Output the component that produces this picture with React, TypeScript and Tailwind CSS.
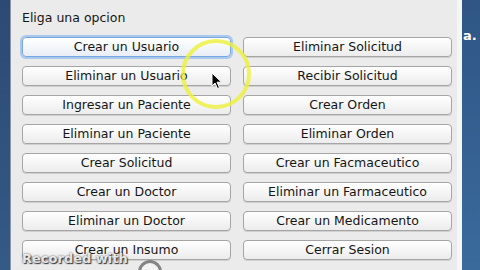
import React from 'react'

const left = [
  'Crear un Usuario',
  'Eliminar un Usuario',
  'Ingresar un Paciente',
  'Eliminar un Paciente',
  'Crear Solicitud',
  'Crear un Doctor',
  'Eliminar un Doctor',
  'Crear un Insumo',
]

const right = [
  'Eliminar Solicitud',
  'Recibir Solicitud',
  'Crear Orden',
  'Eliminar Orden',
  'Crear un Facmaceutico',
  'Eliminar un Farmaceutico',
  'Crear un Medicamento',
  'Cerrar Sesion',
]

function MacButton({ label, focused }: { label: string; focused?: boolean }) {
  return (
    <button
      className={
        focused
          ? 'h-[20px] w-full rounded-[4px] border border-[#7aa7e0] bg-gradient-to-b from-[#ffffff] to-[#e9eef5] text-[12.5px] leading-none text-[#151515] shadow-[0_0_0_2px_#a9c8f0]'
          : 'h-[20px] w-full rounded-[4px] border border-[#a5a5a5] bg-gradient-to-b from-[#ffffff] to-[#ececec] text-[12.5px] leading-none text-[#151515] shadow-[0_1px_0_#d0d0d0]'
      }
      style={{ fontFamily: '"DejaVu Sans", sans-serif' }}
    >
      {label}
    </button>
  )
}

export default function App() {
  return (
    <div className="relative flex h-[270px] w-[480px] overflow-hidden bg-[#e9e9e9]">
      {/* desktop behind, left */}
      <div className="w-[10px] bg-gradient-to-b from-[#2d4a72] to-[#345a86]" />
      <div className="w-px bg-[#8a97a8]" />

      {/* window */}
      <div className="flex w-[446px] flex-col bg-[#ebebeb] pl-[11px] pr-[5px]">
        <div
          className="mt-[10px] h-[16px] text-[12.5px] leading-[16px] text-[#151515]"
          style={{ fontFamily: '"DejaVu Sans", sans-serif' }}
        >
          Eliga una opcion
        </div>
        <div className="mt-[11px] grid grid-cols-2 gap-x-[12px] gap-y-[9px]">
          {left.map((l, i) => (
            <React.Fragment key={l}>
              <MacButton label={l} focused={i === 0} />
              <MacButton label={right[i]} />
            </React.Fragment>
          ))}
        </div>
      </div>

      {/* window edge + desktop right */}
      <div className="w-[5px] bg-[#f6f6f6]" />
      <div className="relative flex-1 bg-gradient-to-b from-[#2f5685] to-[#3a6a9c]">
        <span
          className="absolute left-[1px] top-[26px] text-[13px] font-bold text-white"
          style={{ fontFamily: '"DejaVu Sans", sans-serif' }}
        >
          a.
        </span>
      </div>

      {/* cursor highlight */}
      <div className="pointer-events-none absolute left-[181px] top-[39px] h-[70px] w-[70px] rounded-full border-[4px] border-[#eef03a]/80" />
      <svg className="pointer-events-none absolute left-[211px] top-[72px]" width="12" height="18" viewBox="0 0 12 18">
        <path d="M1 1 L1 14 L4 11 L6.5 16.5 L8.5 15.5 L6 10.2 L10.5 10.2 Z" fill="#000" stroke="#fff" strokeWidth="1" strokeLinejoin="round" />
      </svg>

      {/* recorder watermark */}
      <div
        className="pointer-events-none absolute left-[22px] top-[249px] text-[13px] font-bold text-white/85 [text-shadow:0_0_2px_#444,1px_1px_1px_#333]"
        style={{ fontFamily: '"DejaVu Sans", sans-serif' }}
      >
        Recorded with
      </div>
      <div className="pointer-events-none absolute left-[138px] top-[260px] h-[24px] w-[24px] rounded-full border-[3px] border-[#555]/70 bg-white/40" />
    </div>
  )
}
